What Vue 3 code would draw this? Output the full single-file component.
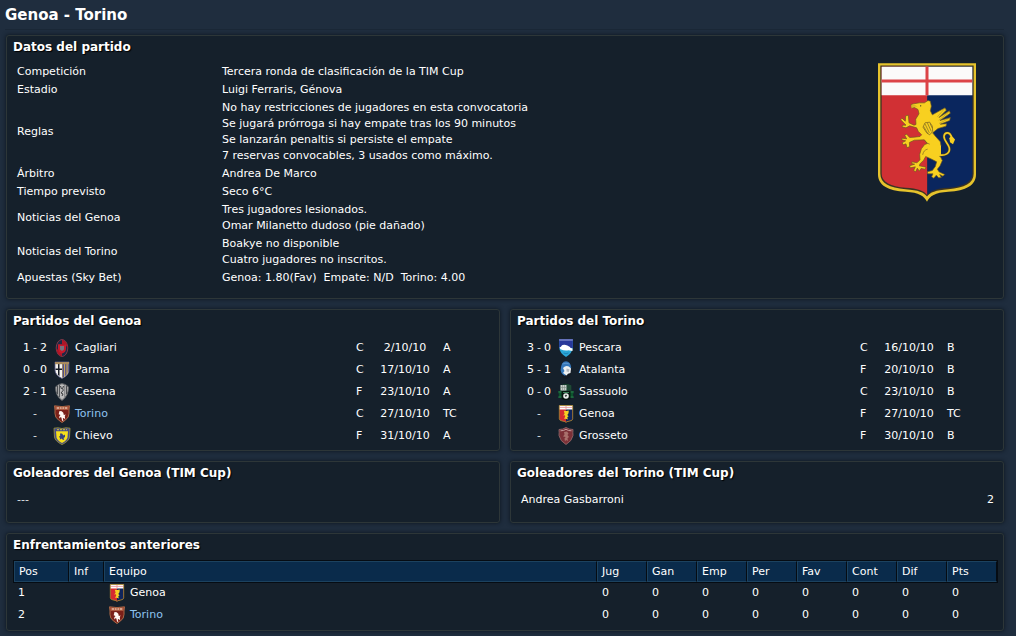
<script setup>
const details = [
  { label: 'Competición', lines: ['Tercera ronda de clasificación de la TIM Cup'] },
  { label: 'Estadio', lines: ['Luigi Ferraris, Génova'] },
  {
    label: 'Reglas',
    lines: [
      'No hay restricciones de jugadores en esta convocatoria',
      'Se jugará prórroga si hay empate tras los 90 minutos',
      'Se lanzarán penaltis si persiste el empate',
      '7 reservas convocables, 3 usados como máximo.',
    ],
  },
  { label: 'Árbitro', lines: ['Andrea De Marco'] },
  { label: 'Tiempo previsto', lines: ['Seco 6°C'] },
  { label: 'Noticias del Genoa', lines: ['Tres jugadores lesionados.', 'Omar Milanetto dudoso (pie dañado)'] },
  { label: 'Noticias del Torino', lines: ['Boakye no disponible', 'Cuatro jugadores no inscritos.'] },
  { label: 'Apuestas (Sky Bet)', lines: ['Genoa: 1.80(Fav)\u00a0 Empate: N/D\u00a0 Torino: 4.00'] },
]

const fixtures = [
  {
    title: 'Partidos del Genoa',
    rows: [
      { home: '1', away: '2', team: 'Cagliari', venue: 'C', date: '2/10/10', comp: 'A' },
      { home: '0', away: '0', team: 'Parma', venue: 'C', date: '17/10/10', comp: 'A' },
      { home: '2', away: '1', team: 'Cesena', venue: 'F', date: '23/10/10', comp: 'A' },
      { home: '', away: '', team: 'Torino', venue: 'C', date: '27/10/10', comp: 'TC', link: true },
      { home: '', away: '', team: 'Chievo', venue: 'F', date: '31/10/10', comp: 'A' },
    ],
  },
  {
    title: 'Partidos del Torino',
    rows: [
      { home: '3', away: '0', team: 'Pescara', venue: 'C', date: '16/10/10', comp: 'B' },
      { home: '5', away: '1', team: 'Atalanta', venue: 'F', date: '20/10/10', comp: 'B' },
      { home: '0', away: '0', team: 'Sassuolo', venue: 'C', date: '23/10/10', comp: 'B' },
      { home: '', away: '', team: 'Genoa', venue: 'F', date: '27/10/10', comp: 'TC' },
      { home: '', away: '', team: 'Grosseto', venue: 'F', date: '30/10/10', comp: 'B' },
    ],
  },
]

const scorers = [
  { title: 'Goleadores del Genoa (TIM Cup)', rows: [{ name: '---', goals: '', muted: true }] },
  { title: 'Goleadores del Torino (TIM Cup)', rows: [{ name: 'Andrea Gasbarroni', goals: '2' }] },
]

const stats = ['Jug', 'Gan', 'Emp', 'Per', 'Fav', 'Cont', 'Dif', 'Pts']
const standings = [
  { pos: 1, team: 'Genoa' },
  { pos: 2, team: 'Torino', link: true },
]
</script>

<template>
  <svg class="sprites" width="0" height="0" aria-hidden="true">
    <symbol id="Cagliari" viewBox="0 0 18 18">
      <ellipse cx="9" cy="9" rx="5.800" ry="8.500" fill="#1d2947" stroke="#8a3a4a" stroke-width=".9" />
      <path d="M9 .8Q14.400 2 14.600 9L12.500 5.500 9 5z" fill="#b01526" />
      <path d="M3.400 9Q3.600 16 9 17.200V14L5 11z" fill="#b01526" />
      <path d="M5 5.200h8v4.300q0 4-4 5-4-1-4-5z" fill="#c51a2c" />
      <path d="M7 7h4v3.500L9 12l-2-1.500z" fill="#77737f" />
    </symbol>
    <symbol id="Parma" viewBox="0 0 18 18">
      <path d="M2 1h14v8q0 5-7 8.500Q2 14 2 9z" fill="#f3f2ee" stroke="#5b5a8a" stroke-width=".8" />
      <path d="M9 3h6.600v6q0 4.500-6.600 8z" fill="#c9a653" />
      <path d="M9.600 3h1.300v13l-1.300.6z M12.200 3h1.200v11l-1.200 1z M14.700 3h1v7l-1 2z" fill="#414695" />
      <path d="M5 3h1.500v12L5 14z M2.500 7.500H9V9H2.500z" fill="#171b24" />
      <path d="M2 1h14v2.200H2z" fill="#a98b5e" />
    </symbol>
    <symbol id="Cesena" viewBox="0 0 18 18">
      <path d="M9 .5Q13 1 15.500 4q0 9-6.500 13.500Q2.500 13 2.500 4 5 1 9 .5z" fill="#aaaaaa" stroke="#5f6266" />
      <path d="M4.500 3v8M6.600 2v12M11.400 2v12M13.500 3v8" stroke="#4d4f52" stroke-width="1" />
      <path d="M7 2h4.500v12L9 16l-2-2z" fill="#bdbdbd" />
      <path d="M7.500 3l1 3M10.500 3l-1 3 1 1-2.500 3 2 1-1 2" stroke="#3a3c3f" stroke-width="1" fill="none" />
    </symbol>
    <symbol id="Torino" viewBox="0 0 18 18">
      <path d="M1.500.8 9 1.600 16.500.8 16 5q.5 3-.8 7-2 3-6.200 5.500Q4.800 15 2.800 12 1.500 8 2 5z" fill="#7b2019" stroke="#b2714c" stroke-width=".9" />
      <path d="M2.300 1.500 9 2.200l6.700-.7-.3 3.200H2.600z" fill="#b96a4c" />
      <path d="M4 3h2M7 3h1.500M9.500 3H11M12 3h2" stroke="#f1d9c9" stroke-width="1.200" />
      <path d="M6.500 6l2.200.3 1.600 1.500.5 2.200 1.900-.6-.9 1.600.4 3.500-1.400-1.500-1 .5.600 2.700-1.400-.7-.6-3-1.200-.3-1.200 1.200.4-2.200 1.100-1.200-1.800-.8z" fill="#fff7f2" />
    </symbol>
    <symbol id="Chievo" viewBox="0 0 18 18">
      <path d="M1 1.200 5 .8 9 1.500 13 .8l4 .4-.5 9Q16 14 9 17.600 2 14 1.500 10z" fill="#454a8a" stroke="#958f3c" stroke-width=".9" />
      <path d="M3 4.200h12l-.5 6Q14 13.500 9 16 4 13.500 3.500 10.200z" fill="#f5de1c" />
      <path d="M4 2.600h10" stroke="#b9ab4c" stroke-width="1.300" stroke-dasharray="2 1" />
      <path d="M7 6.500h2l1.500 2 1.500-1v2.500L10.600 11l.6 2-1.700-.5-1-1-1.700 1.200.3-2L5.800 10l1.400-1.200z" fill="#344080" />
    </symbol>
    <symbol id="Pescara" viewBox="0 0 18 18">
      <path d="M2.200 0h13.600v8.500Q15.500 14 9 18 2.500 14 2.200 8.500z" fill="#2ba7d8" />
      <path d="M2.200 0h13.600v9H2.200z" fill="#29389a" />
      <path d="M2.200 0h13.600v2H2.200z" fill="#6471ba" />
      <path d="M2.500 8.500Q6 6 9 7l3 1.500 3.500 1v2.500l-4-.7q-4 .8-8-1z" fill="#fff" />
      <path d="M4.500 7.800q2-2 5.500-.6l3 1.800" stroke="#fff" stroke-width="1.500" fill="none" />
      <path d="M6.500 14q2.500 1.500 5 0" stroke="#1c83b8" fill="none" />
    </symbol>
    <symbol id="Atalanta" viewBox="0 0 18 18">
      <ellipse cx="9" cy="9" rx="5.600" ry="9" fill="#151b24" />
      <path d="M3.600 9Q4 .4 9 .2q4.500.4 5.300 6.500L8 10l.5 5Q4 13.500 3.600 9z" fill="#3577ba" />
      <path d="M5.500 3q3.500-1.600 7 0" stroke="#6fa4d6" stroke-width=".7" fill="none" />
      <path d="M6 7Q10 3 14 7.500l-.5 4.500-2.500.8-1.500 1.700L6 12l1.500-2z" fill="#eef1f2" />
      <path d="M9.500 7.500l3 .8-.7 2.700-2.300-.5z" fill="#b4b9bf" />
    </symbol>
    <symbol id="Sassuolo" viewBox="0 0 18 18">
      <path d="M3.500 2.500Q9-1 14.500 2.500V9h-11z" fill="#173e2e" />
      <path d="M3.500 2h6v5.500h-6z" fill="#c7d0cb" />
      <path d="M5.500 2v5.500M7.500 2v5.500M3.500 4.500h6" stroke="#7d8a83" stroke-width=".6" />
      <path d="M11 1.500v6M13 2v5" stroke="#28543d" />
      <path d="M1 8h16l-1 4 1 3H1l1-3z" fill="#0c552d" />
      <path d="M1.500 9h15M1.500 14h15" stroke="#3a8258" stroke-width=".8" />
      <path d="M4.500 8v8Q9 18 13.500 16V8z" fill="#07160e" />
      <path d="M6 9.500h6" stroke="#3a8258" />
      <circle cx="9" cy="13" r="2.800" fill="#e6ebe8" />
      <path d="M9 11.500l1.200 1.200L8.700 14l-1-1.200z" fill="#2a3a30" />
    </symbol>
    <symbol id="Genoa" viewBox="0 0 18 18">
      <path d="M2.300.5h13.400v13.300q0 2-3.700 2.400-2.500.2-3 1.300-.5-1.100-3-1.300-3.700-.4-3.700-2.400z" fill="#d52b30" />
      <path d="M9 4h6.500v9.800q0 2-3.500 2.300-2.500.2-3 1z" fill="#10255b" />
      <path d="M2.300.5h13.400v4H2.300z" fill="#fff" />
      <path d="M9 .5v4M2.300 2.400h13.400" stroke="#e99a9b" stroke-width=".9" />
      <path d="M6.800 5.800 9 6l2.800-.6-.3 2.800L10.300 10l1.300 1.200-1.300 1 .5 2.300-2.200-.7L7 13.800l1.200-2.100-.2-1.500-1.800.3L7.600 8.700z" fill="#f6cf23" />
      <path d="M2.300.5h13.400v13.300q0 2-3.700 2.400-2.500.2-3 1.300-.5-1.100-3-1.300-3.700-.4-3.700-2.400z" fill="none" stroke="#a38b32" stroke-width=".8" />
    </symbol>
    <symbol id="Grosseto" viewBox="0 0 18 18">
      <path d="M2 2.500Q6 2.500 9 .5q3 2 7 2-.3 3 0 6Q15 14 9 17.500 3 14 2 8.500q.3-3 0-6z" fill="#7c3037" stroke="#8f6669" stroke-width=".9" />
      <path d="M3.500 3.800q3.500 0 5.500-1.500 2 1.500 5.500 1.500" stroke="#c69a9b" fill="none" />
      <path d="M7 5l3-.5 1.500 2-1 1.500 1.500 2-1.500 1.200.5 2.800-2-1-1 1.500-.5-3 1.200-1.500L6 9.500l1.500-2z" fill="#a9706c" />
    </symbol>
  </svg>

  <main class="page">
    <h1>Genoa - Torino</h1>

    <div class="panels">
      <section class="panel match">
        <h2>Datos del partido</h2>
        <div class="match-body">
          <table class="details">
            <tbody>
              <tr v-for="item in details" :key="item.label">
                <th scope="row">{{ item.label }}</th>
                <td>
                  <div v-for="line in item.lines" :key="line">{{ line }}</div>
                </td>
              </tr>
            </tbody>
          </table>
          <svg class="crest" viewBox="54 38 294 416" role="img" aria-label="Genoa">
            <path d="M54 38H348V372C348 404 318 421 265 424C225 426 209 437 201 454C193 437 177 426 137 424C84 421 54 404 54 372Z" fill="#e6c32c" />
            <path d="M61 45H341V370C341 398 314 413 265 416C226 419 211 425 201 438C191 425 176 419 137 416C88 413 61 398 61 370Z" fill="#3b3323" />
            <path d="M65 49H202V434C190 420 174 414 137 412C92 409 65 395 65 370Z" fill="#d13034" />
            <path d="M202 49H337V370C337 395 310 409 265 412C228 414 212 420 202 434Z" fill="#0a265e" />
            <path d="M65 49H337V134H65Z" fill="#fbfafa" />
            <path d="M201 48V134M65 91.500H337" stroke="#dc4347" stroke-width="9" fill="none" />
            <g transform="translate(105 135)">
              <path d="M132 178C150 182 166 173 163 157C160 144 146 135 147 122C149 109 164 108 169 123" fill="none" stroke="#3f3a2c" stroke-width="8" />
              <g fill="#f8d020" stroke="#6b5821" stroke-width="2" stroke-linejoin="round">
                <path d="M52 38 48 27 56 25 73 22 88 22 99 15 106 17 109 32 106 46 112 58 150 37 154 44 132 66 163 46 166 53 135 75 166 66 164 75 136 86 155 85 153 92 129 99 113 112 120 121 136 139 138 151 129 162 117 173 136 183 142 195 135 211 127 221 132 229 149 237 144 242 134 237 139 246 131 247 124 239 116 248 110 244 114 235 98 235 97 229 112 225 121 213 125 199 110 191 92 183 86 194 75 205 73 211 93 215 91 221 78 219 73 227 67 218 62 229 56 225 61 214 46 217 44 211 59 206 50 204 51 199 66 202 75 193 74 177 79 160 89 147 97 144 88 133 58 134 43 141 44 153 36 157 33 145 25 148 21 142 32 136 20 133 21 128 35 130 29 119 35 116 44 126 58 125 75 123 80 118 70 108 65 97 44 91 33 97 21 94 23 89 33 89 17 73 21 68 31 77 32 61 40 59 42 82 57 89 63 87 62 71 72 55 69 42 58 36Z" />
                <path d="M84 95 90 82 104 80 112 92 113 108 104 118 95 112Z" />
              </g>
              <path d="M116 148 138 151 138 180 126 184 112 176Z" fill="#f8d020" />
              <path d="M48 30Q57 25 68 33L55 34 50 39Z" fill="#d7b726" />
              <circle cx="77" cy="31" r="2" fill="#302c22" />
              <path d="M90 85 103 112M97 82 109 108M86 93 99 115M105 84 112 98M88 134Q96 145 104 146M83 178Q86 163 98 161" fill="none" stroke="#776425" stroke-width="2" />
              <path d="M151 37 127 64M164 47 131 75M165 67 132 84" fill="none" stroke="#776425" stroke-width="1" />
              <path d="M132 178C150 182 166 173 163 157C160 144 146 135 147 122C149 109 164 108 169 123" fill="none" stroke="#f1cb25" stroke-width="5" />
              <path d="M169 119 180 132 174 146 165 140 163 128Z" fill="#f8d020" />
            </g>
          </svg>
        </div>
      </section>

      <section v-for="group in fixtures" :key="group.title" class="panel half">
        <h2>{{ group.title }}</h2>
        <table class="fixtures">
          <tbody>
            <tr v-for="row in group.rows" :key="row.team">
              <td class="score">
                <span class="result"><span>{{ row.home }}</span><span class="dash">-</span><span>{{ row.away }}</span></span>
              </td>
              <td class="badge"><svg class="icon" aria-hidden="true"><use :href="'#' + row.team" /></svg></td>
              <td><a v-if="row.link" href="#">{{ row.team }}</a><template v-else>{{ row.team }}</template></td>
              <td class="venue">{{ row.venue }}</td>
              <td class="date">{{ row.date }}</td>
              <td class="comp">{{ row.comp }}</td>
            </tr>
          </tbody>
        </table>
      </section>

      <section v-for="group in scorers" :key="group.title" class="panel half scorers">
        <h2>{{ group.title }}</h2>
        <table>
          <tbody>
            <tr v-for="row in group.rows" :key="row.name">
              <td :class="{ muted: row.muted }">{{ row.name }}</td>
              <td class="goals">{{ row.goals }}</td>
            </tr>
          </tbody>
        </table>
      </section>

      <section class="panel history">
        <h2>Enfrentamientos anteriores</h2>
        <table class="standings">
          <thead>
            <tr>
              <th scope="col" class="pos">Pos</th>
              <th scope="col" class="inf">Inf</th>
              <th scope="col">Equipo</th>
              <th v-for="stat in stats" :key="stat" scope="col" class="stat">{{ stat }}</th>
            </tr>
          </thead>
          <tbody>
            <tr v-for="row in standings" :key="row.team">
              <td>{{ row.pos }}</td>
              <td></td>
              <td>
                <span class="team">
                  <svg class="icon" aria-hidden="true"><use :href="'#' + row.team" /></svg>
                  <a v-if="row.link" href="#">{{ row.team }}</a><span v-else>{{ row.team }}</span>
                </span>
              </td>
              <td v-for="stat in stats" :key="stat" class="value">0</td>
            </tr>
          </tbody>
        </table>
      </section>
    </div>
  </main>
</template>

<style>
html {
  background: #1f2d3e;
}
</style>

<style scoped>
.sprites {
  position: absolute;
}

.page {
  box-sizing: border-box;
  min-height: 100vh;
  padding: 0 12px 4px 6px;
  color: #fff;
  font: 11px/16px "DejaVu Sans", Verdana, sans-serif;
}

h1 {
  margin: 0 0 5px -1px;
  padding: 5px 0 4px;
  border-bottom: 1px solid #1a2736;
  font-size: 15px;
  line-height: 20px;
}

h2 {
  margin: 0;
  padding: 0 6px;
  font-size: 12px;
  line-height: 22px;
  text-shadow: 1px 1px 1px #000;
}

.panels {
  display: grid;
  grid-template-columns: 1fr 1fr;
  gap: 10px;
}

.panel {
  border: 1px solid #2d3638;
  border-radius: 3px;
  background: #15202b;
  box-shadow: 0 0 4px #0c141d;
}

.match,
.history {
  grid-column: 1 / -1;
}

table {
  width: 100%;
  border-collapse: collapse;
}

th,
td {
  padding: 0;
  font-weight: normal;
  text-align: left;
}

a {
  color: #8fc3f0;
  text-decoration: none;
}

.match-body {
  display: flex;
  align-items: flex-start;
  padding: 5px 27px 11px 10px;
}

.details {
  flex: 1;
}

.details th {
  width: 205px;
}

.details th,
.details td {
  padding: 1px 0;
}

.crest {
  flex: none;
  width: 98px;
  height: 139px;
}

.icon {
  display: block;
  width: 18px;
  height: 18px;
}

.half {
  padding-bottom: 3px;
}

.fixtures {
  margin-top: 5px;
  table-layout: fixed;
}

.fixtures td {
  height: 22px;
}

.fixtures .score {
  width: 46px;
}

.result {
  display: grid;
  grid-template-columns: 7px 10px 7px;
  justify-content: center;
  padding-left: 10px;
  text-align: center;
}

.dash,
.muted {
  color: #dfe2e5;
}

.fixtures .badge {
  width: 22px;
}

.fixtures .venue {
  width: 18px;
}

.fixtures .date {
  width: 62px;
  text-align: center;
}

.fixtures .comp {
  width: 56px;
  padding-left: 7px;
}

.scorers {
  padding-bottom: 11px;
}

.scorers table {
  margin-top: 5px;
}

.scorers td {
  height: 22px;
  padding: 0 9px 0 10px;
}

.scorers .goals {
  text-align: right;
}

.history {
  padding-bottom: 4px;
}

.history table {
  width: calc(100% - 13px);
  margin: 5px 6px 0 7px;
  border-collapse: separate;
  border-spacing: 0;
  table-layout: fixed;
}

.standings thead {
  outline: 1px solid #060c13;
}

.standings th {
  box-sizing: border-box;
  height: 21px;
  padding: 0 4px;
  border: 1px solid #1c425f;
  border-right-color: #060c13;
  background: #0a2b4b;
}

.standings .pos {
  width: 55px;
}

.standings .inf {
  width: 35px;
}

.standings .stat {
  width: 50px;
}

.standings td {
  height: 22px;
  padding: 0 4px;
}

.standings .value {
  padding: 0 5px;
}

.team {
  display: flex;
  align-items: center;
  gap: 4px;
}
</style>
